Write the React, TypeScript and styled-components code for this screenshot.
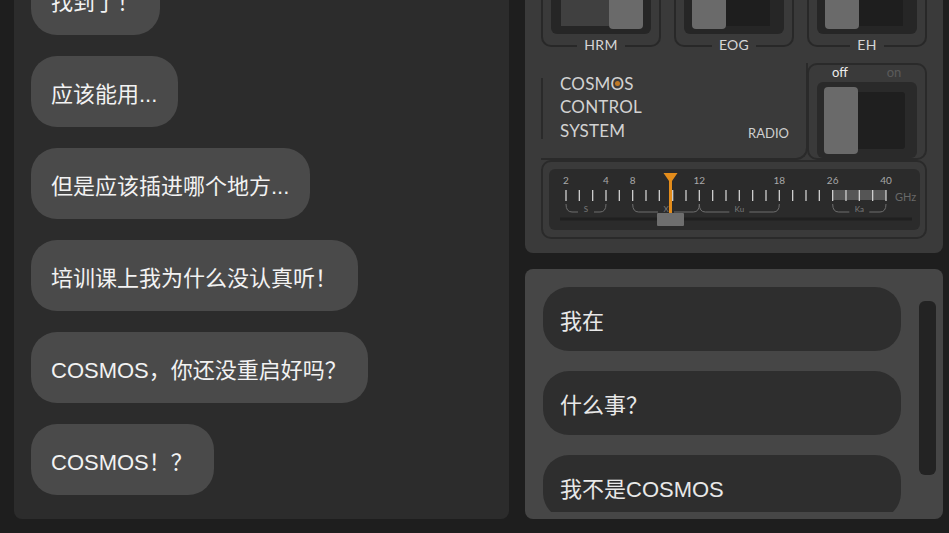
import React from "react";
import styled, { createGlobalStyle } from "styled-components";

const GlobalStyle = createGlobalStyle`
  html, body {
    margin: 0;
    padding: 0;
    background: #1e1e1e;
  }
  body {
    font-family: "Liberation Sans", "Noto Sans CJK SC", sans-serif;
  }
  * {
    box-sizing: border-box;
  }
`;

const leftMessages = [
  "找到了！",
  "应该能用...",
  "但是应该插进哪个地方...",
  "培训课上我为什么没认真听！",
  "COSMOS，你还没重启好吗？",
  "COSMOS！？",
];

const rightMessages = ["我在", "什么事？", "我不是COSMOS"];

const switches = [
  { label: "HRM", on: true },
  { label: "EOG", on: false },
  { label: "EH", on: false },
];

const tickX = (i: number) => 17 + i * 13.333;
const scaleLabels: [number, string][] = [
  [0, "2"],
  [3, "4"],
  [5, "8"],
  [10, "12"],
  [16, "18"],
  [20, "26"],
  [24, "40"],
];
const bands = [
  { from: 0, to: 3, label: "S", gap: 8 },
  { from: 5, to: 10, label: "X", gap: 8 },
  { from: 10, to: 16, label: "Ku", gap: 10 },
  { from: 20, to: 24, label: "Ka", gap: 10 },
];

const RadioDial = () => (
  <svg width="100%" height="100%" viewBox="0 0 371 61">
    <rect x={tickX(20)} y={21} width={tickX(24) - tickX(20)} height={10} fill="#555" />
    {scaleLabels.map(([i, t]) => (
      <text
        key={t}
        x={tickX(i)}
        y={15}
        fontSize={10}
        fill="#a8a8a8"
        textAnchor="middle"
        fontFamily="Lato, sans-serif"
      >
        {t}
      </text>
    ))}
    {Array.from({ length: 25 }, (_, i) => (
      <line
        key={i}
        x1={tickX(i)}
        x2={tickX(i)}
        y1={21}
        y2={32}
        stroke="#cfcfcf"
        strokeWidth={1.3}
      />
    ))}
    <text x={346} y={32} fontSize={11} fill="#686868" fontFamily="Lato, sans-serif">
      GHz
    </text>
    {bands.map((b) => {
      const x1 = tickX(b.from);
      const x2 = tickX(b.to);
      const mid = (x1 + x2) / 2;
      return (
        <g key={b.label}>
          <path
            d={`M ${x1} 35 Q ${x1} 43 ${x1 + 6} 43 H ${mid - b.gap} M ${mid + b.gap} 43 H ${x2 - 6} Q ${x2} 43 ${x2} 35`}
            fill="none"
            stroke="#6e6e6e"
            strokeWidth={1}
          />
          <text
            x={mid}
            y={43}
            fontSize={8}
            fill="#7a7a7a"
            textAnchor="middle"
            fontFamily="Lato, sans-serif"
          >
            {b.label}
          </text>
        </g>
      );
    })}
    <line x1={11} x2={363} y1={50} y2={50} stroke="#202020" strokeWidth={3} />
    <path d="M 114.5 4 H 128.5 L 123 12 V 45 H 120 V 12 Z" fill="#e38c1b" />
    <rect x={108} y={44} width={27} height={13} rx={1} fill="#6e6e6e" />
  </svg>
);

const App = () => {
  return (
    <>
      <GlobalStyle />
      <Page>
        <LeftPanel>
          {leftMessages.map((m) => (
            <LeftBubble key={m}>{m}</LeftBubble>
          ))}
        </LeftPanel>

        <RightColumn>
          <ControlPanel>
            <FrameRow>
              {switches.map((s) => (
                <SwitchFrame key={s.label}>
                  <FrameBody>
                    <Housing>
                      {s.on && <Track $on />}
                      <Knob />
                      {!s.on && <Track />}
                    </Housing>
                  </FrameBody>
                  <FrameFoot>
                    <FootLine $side="left" />
                    <FrameLabel>{s.label}</FrameLabel>
                    <FootLine $side="right" />
                  </FrameFoot>
                </SwitchFrame>
              ))}
            </FrameRow>

            <ModeRow>
              <TitleBlock>
                <VLine />
                <Title>
                  COSM<Lamp>O</Lamp>S
                  <br />
                  CONTROL
                  <br />
                  SYSTEM
                </Title>
                <RadioLabel>RADIO</RadioLabel>
              </TitleBlock>

              <PowerBox>
                <PowerLabels>
                  <PowerLabel $active>off</PowerLabel>
                  <PowerLabel>on</PowerLabel>
                </PowerLabels>
                <PowerHousing>
                  <PowerKnob />
                  <PowerTrack />
                </PowerHousing>
              </PowerBox>
            </ModeRow>

            <RadioFrame>
              <Dial>
                <RadioDial />
              </Dial>
            </RadioFrame>
          </ControlPanel>

          <ReplyPanel>
            <ReplyList>
              {rightMessages.map((m) => (
                <ReplyBubble key={m}>{m}</ReplyBubble>
              ))}
            </ReplyList>
            <ScrollBar />
          </ReplyPanel>
        </RightColumn>
      </Page>
    </>
  );
};

export default App;

const Page = styled.div`
  width: 949px;
  height: 533px;
  display: grid;
  grid-template-columns: 495px 418px;
  column-gap: 16px;
  padding: 0 6px 14px 14px;
  overflow: hidden;
`;

const LeftPanel = styled.div`
  display: flex;
  flex-direction: column;
  justify-content: flex-end;
  align-items: flex-start;
  gap: 21px;
  padding: 0 17px 24px;
  background: #2c2c2c;
  border-radius: 0 0 8px 8px;
  overflow: hidden;
  min-height: 0;
`;

const LeftBubble = styled.div`
  flex-shrink: 0;
  height: 71px;
  display: flex;
  align-items: center;
  padding: 0 21px 0 20px;
  border-radius: 26px;
  background: #4a4a4a;
  color: #f2f2f2;
  font-size: 22px;
  white-space: nowrap;
`;

const RightColumn = styled.div`
  display: flex;
  flex-direction: column;
  gap: 16px;
  min-height: 0;
`;

const ControlPanel = styled.div`
  flex-shrink: 0;
  height: 253px;
  display: flex;
  flex-direction: column;
  justify-content: flex-end;
  padding: 0 16px 14px;
  background: #3a3a3a;
  border-radius: 0 0 8px 8px;
  overflow: hidden;
  font-family: Lato, "Liberation Sans", sans-serif;
  color: #d4d4d4;
`;

const FrameRow = styled.div`
  flex-shrink: 0;
  display: grid;
  grid-template-columns: repeat(3, 1fr);
  column-gap: 13px;
  margin-bottom: 16px;
`;

const SwitchFrame = styled.div`
  display: flex;
  flex-direction: column;
`;

const FrameBody = styled.div`
  border-left: 2px solid #282828;
  border-right: 2px solid #282828;
  padding: 0 8px;
`;

const Housing = styled.div`
  height: 50px;
  display: flex;
  align-items: flex-start;
  padding: 0 8px 5px 8px;
  background: #262626;
  border-radius: 0 0 6px 6px;
`;

const Knob = styled.div`
  width: 34px;
  align-self: stretch;
  background: #6a6a6a;
  border-radius: 0 0 4px 4px;
`;

const Track = styled.div<{ $on?: boolean }>`
  flex: 1;
  height: calc(100% - 3px);
  margin-right: ${(p) => (p.$on ? "0" : "6px")};
  margin-left: ${(p) => (p.$on ? "2px" : "0")};
  background: ${(p) => (p.$on ? "#404040" : "#1e1e1e")};
`;

const FrameFoot = styled.div`
  height: 13px;
  display: flex;
  align-items: flex-end;
`;

const FootLine = styled.div<{ $side: "left" | "right" }>`
  flex: 1;
  height: 100%;
  border-bottom: 2px solid #282828;
  ${(p) =>
    p.$side === "left"
      ? "border-left: 2px solid #282828; border-bottom-left-radius: 10px;"
      : "border-right: 2px solid #282828; border-bottom-right-radius: 10px;"}
`;

const FrameLabel = styled.span`
  padding: 0 7px;
  margin-bottom: -5px;
  font-size: 14px;
  line-height: 14px;
  color: #d6d6d6;
  letter-spacing: 0.3px;
`;

const ModeRow = styled.div`
  flex-shrink: 0;
  height: 97px;
  display: grid;
  grid-template-columns: 1fr 120px;
  column-gap: 2px;
`;

const TitleBlock = styled.div`
  display: flex;
  align-items: center;
  margin-right: -3px;
  border-right: 2px solid #2a2a2a;
  border-bottom: 2px solid #2a2a2a;
  border-bottom-right-radius: 12px;
`;

const VLine = styled.div`
  width: 2px;
  height: 61px;
  margin-bottom: 4px;
  background: #2a2a2a;
`;

const Title = styled.div`
  margin-left: 17px;
  padding-bottom: 7px;
  font-size: 17px;
  line-height: 23.5px;
  letter-spacing: 0.2px;
  color: #d2d2d2;
`;

const Lamp = styled.span`
  position: relative;

  &::after {
    content: "";
    position: absolute;
    left: 50%;
    top: 50%;
    width: 5px;
    height: 5px;
    margin: -2px 0 0 -2.5px;
    border-radius: 50%;
    background: #c07a26;
  }
`;

const RadioLabel = styled.span`
  margin-left: auto;
  align-self: flex-end;
  margin-right: 17px;
  margin-bottom: 18px;
  font-size: 13px;
  line-height: 14px;
  color: #cfcfcf;
`;

const PowerBox = styled.div`
  position: relative;
  display: flex;
  flex-direction: column;
  padding: 0 8px;
  background: #3a3a3a;
  border: 2px solid #2a2a2a;
  border-radius: 10px;
`;

const PowerLabels = styled.div`
  height: 17px;
  display: flex;
`;

const PowerLabel = styled.span<{ $active?: boolean }>`
  flex: 1;
  text-align: center;
  padding-left: ${(p) => (p.$active ? "0" : "8px")};
  font-size: 13px;
  line-height: 15px;
  color: ${(p) => (p.$active ? "#ececec" : "#5a5a5a")};
`;

const PowerHousing = styled.div`
  flex: 1;
  display: flex;
  padding: 5px 12px 4px 7px;
  background: #2a2a2a;
  border-radius: 6px;
`;

const PowerKnob = styled.div`
  width: 34px;
  background: #6a6a6a;
  border-radius: 4px;
`;

const PowerTrack = styled.div`
  flex: 1;
  align-self: center;
  height: 57px;
  background: #1f1f1f;
  border-radius: 0 3px 3px 0;
`;

const RadioFrame = styled.div`
  flex-shrink: 0;
  height: 79px;
  display: flex;
  padding: 7px 5px 7px 6px;
  border: 2px solid #2a2a2a;
  border-radius: 10px;
`;

const Dial = styled.div`
  flex: 1;
  background: #2b2b2b;
  border-radius: 6px;

  svg {
    display: block;
  }
`;

const ReplyPanel = styled.div`
  flex: 1;
  min-height: 0;
  display: flex;
  gap: 18px;
  padding: 18px 7px 7px 18px;
  background: #464646;
  border-radius: 8px;
`;

const ReplyList = styled.div`
  flex: 1;
  display: flex;
  flex-direction: column;
  gap: 20px;
  overflow: hidden;
`;

const ReplyBubble = styled.div`
  flex-shrink: 0;
  height: 64px;
  display: flex;
  align-items: center;
  padding: 0 17px;
  border-radius: 26px;
  background: #2e2e2e;
  color: #e8e8e8;
  font-size: 22px;
  white-space: nowrap;
`;

const ScrollBar = styled.div`
  width: 17px;
  height: 174px;
  margin-top: 14px;
  background: #232323;
  border-radius: 6px;
`;
